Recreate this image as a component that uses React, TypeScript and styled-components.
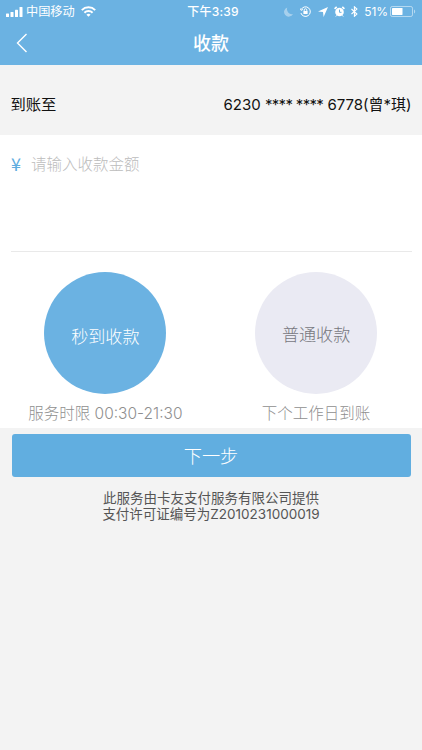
import React from "react";
import styled, { createGlobalStyle } from "styled-components";

const GlobalStyle = createGlobalStyle`
  * { box-sizing: border-box; }
  body {
    margin: 0;
    background: #f3f3f3;
    font-family: Inter, "Noto Sans CJK SC", sans-serif;
  }
  button { font-family: inherit; border: 0; padding: 0; }
`;

const Screen = styled.main`
  width: 422px;
  height: 750px;
  overflow: hidden;
  display: flex;
  flex-direction: column;
  background: #f3f3f3;
`;

const Header = styled.header`
  height: 65px;
  flex: none;
  background: #6bb2e2;
  color: #fff;
`;

const StatusBar = styled.div`
  height: 22px;
  padding: 0 6px 0 6px;
  display: grid;
  grid-template-columns: 1fr auto 1fr;
  align-items: center;
  font-size: 12px;
  line-height: 22px;
`;

const StatusGroup = styled.div<{ $end?: boolean }>`
  display: flex;
  align-items: center;
  height: 22px;
  justify-content: ${(p) => (p.$end ? "flex-end" : "flex-start")};
`;

const Carrier = styled.span`
  margin: 0 6px 0 3px;
  padding-top: 1px;
  font-size: 12.2px;
`;

const Clock = styled.span`
  font-weight: 500;
  font-size: 12px;
  letter-spacing: 0.25px;
  padding: 1px 0 0 4px;
`;

const Battery = styled.span`
  margin: 0 2px 0 6px;
  letter-spacing: -0.1px;
`;

const Icon = styled.svg<{ $gap?: number; $dim?: boolean }>`
  display: block;
  flex: none;
  margin-right: ${(p) => p.$gap ?? 0}px;
  opacity: ${(p) => (p.$dim ? 0.4 : 1)};
`;

const NavBar = styled.nav`
  height: 43px;
  padding: 0 16px;
  display: grid;
  grid-template-columns: 40px 1fr 40px;
  align-items: center;
`;

const BackButton = styled.button`
  display: flex;
  padding-bottom: 2px;
  background: none;
  color: inherit;
`;

const Title = styled.h1`
  margin: 0;
  text-align: center;
  font-size: 18px;
  line-height: 42px;
  font-weight: 500;
`;

const AccountRow = styled.section`
  height: 70px;
  flex: none;
  padding: 6px 10.5px 0;
  display: flex;
  align-items: center;
  justify-content: space-between;
  font-size: 15.3px;
  color: #111;
`;

const AccountNumber = styled.span`
  font-size: 15px;
  white-space: nowrap;
`;

const Mask = styled.span`
  letter-spacing: -0.68px;
`;

const Panel = styled.section`
  height: 293px;
  flex: none;
  background: #fff;
`;

const AmountField = styled.label`
  margin: 0 10px 0 11px;
  height: 117px;
  border-bottom: 1px solid #e9e9e9;
  padding-top: 18px;
  display: flex;
  align-items: flex-start;
`;

const Currency = styled.span`
  width: 20px;
  color: #60addf;
  font-family: "Noto Sans CJK SC", sans-serif;
  font-size: 18px;
  line-height: 20px;
`;

const AmountInput = styled.input`
  flex: 1;
  border: 0;
  padding: 0;
  height: 24px;
  background: none;
  outline: none;
  font: 300 15.5px/24px Inter, "Noto Sans CJK SC", sans-serif;
  &::placeholder { color: #bcbcbc; opacity: 1; }
`;

const Options = styled.div`
  display: grid;
  grid-template-columns: 1fr 1fr;
  padding: 20px 0.5px 0 0;
`;

const Option = styled.div`
  display: flex;
  flex-direction: column;
  align-items: center;
`;

const Disc = styled.button<{ $active?: boolean }>`
  width: 122px;
  height: 122px;
  border-radius: 50%;
  font-size: 17.1px;
  font-weight: 300;
  padding-top: ${(p) => (p.$active ? 4 : 0)}px;
  background: ${(p) => (p.$active ? "#6bb2e2" : "#eaeaf3")};
  color: ${(p) => (p.$active ? "#fff" : "#77777d")};
`;

const OptionNote = styled.span`
  margin-top: 8px;
  line-height: 24px;
  font-size: 15.5px;
  font-weight: 300;
  color: #8f8f8f;
  white-space: nowrap;
`;

const NextButton = styled.button`
  flex: none;
  height: 43px;
  margin: 6px 11.5px 0;
  padding-bottom: 2px;
  border-radius: 3px;
  background: #61aee0;
  color: #fff;
  font-size: 18.2px;
  font-weight: 300;
`;

const Notice = styled.footer`
  margin-top: 14px;
  display: flex;
  flex-direction: column;
  align-items: center;
  font-size: 13.5px;
  line-height: 15.5px;
  color: #555;
`;

const SignalIcon = () => (
  <Icon width="17" height="10" viewBox="0 0 17 10" fill="currentColor">
    <rect x="0" y="6.5" width="3" height="3.5" rx=".6" />
    <rect x="4.5" y="5" width="3" height="5" rx=".6" />
    <rect x="9" y="2.8" width="3" height="7.2" rx=".6" />
    <rect x="13.5" y="0" width="3" height="10" rx=".6" />
  </Icon>
);

const WifiIcon = () => (
  <Icon width="15" height="11" viewBox="0 0 15 11" fill="none" stroke="currentColor" strokeWidth="2">
    <path d="M.8 4.1a9.5 9.5 0 0 1 13.4 0" />
    <path d="M3.4 6.7a5.8 5.8 0 0 1 8.2 0" />
    <path d="M7.5 10.8 5.4 8.7a3 3 0 0 1 4.2 0Z" fill="currentColor" stroke="none" />
  </Icon>
);

const MoonIcon = () => (
  <Icon $gap={7} $dim width="9" height="10" viewBox="0 0 9 10" fill="currentColor">
    <path d="M3.3.5A4.7 4.7 0 1 0 9 7 4.9 4.9 0 0 1 3.3.5Z" />
  </Icon>
);

const RotationLockIcon = () => (
  <Icon $gap={7} width="11" height="11" viewBox="0 0 11 11" fill="none" stroke="currentColor">
    <path d="M1.2 3.5A4.8 4.8 0 1 1 .9 7" />
    <path d="m.2 2.4.9 2 1.9-1" strokeWidth=".9" />
    <rect x="3.4" y="5" width="4.2" height="3" fill="currentColor" stroke="none" />
    <path d="M4.2 5V4a1.3 1.3 0 0 1 2.6 0v1" strokeWidth=".9" />
  </Icon>
);

const LocationIcon = () => (
  <Icon $gap={6} width="10" height="10" viewBox="0 0 10 10" fill="currentColor">
    <path d="M10 0 5.6 10 5 5 0 4.5Z" />
  </Icon>
);

const AlarmIcon = () => (
  <Icon $gap={6} width="11" height="11" viewBox="0 0 11 11">
    <circle cx="5.5" cy="6" r="4.3" fill="#fff" />
    <path d="M.6 2.8 2.7.9M10.4 2.8 8.3.9" stroke="#fff" strokeWidth="1.7" />
    <path d="m2.8 9.3-1 1.2M8.2 9.3l1 1.2" stroke="#fff" />
    <path d="M5.5 3.6v2.7h2" fill="none" stroke="#6bb2e2" />
  </Icon>
);

const BluetoothIcon = () => (
  <Icon width="7" height="11" viewBox="0 0 7 11" fill="none" stroke="currentColor" strokeWidth="1.1">
    <path d="m.5 3 5.4 5-2.5 2.3V.8l2.5 2.3L.5 8" />
  </Icon>
);

const BatteryIcon = () => (
  <Icon width="26" height="11" viewBox="0 0 26 11">
    <rect x=".5" y=".5" width="22" height="10" rx="1.7" fill="none" stroke="#fff" strokeOpacity=".5" />
    <rect x="2" y="2" width="10.5" height="7" rx=".4" fill="#fff" />
    <path d="M24 3.5c1.6.8 1.6 3.2 0 4Z" fill="#fff" opacity=".5" />
  </Icon>
);

export default function App() {
  return (
    <Screen>
      <GlobalStyle />
      <Header>
        <StatusBar>
          <StatusGroup>
            <SignalIcon />
            <Carrier>中国移动</Carrier>
            <WifiIcon />
          </StatusGroup>
          <Clock>下午3:39</Clock>
          <StatusGroup $end>
            <MoonIcon />
            <RotationLockIcon />
            <LocationIcon />
            <AlarmIcon />
            <BluetoothIcon />
            <Battery>51%</Battery>
            <BatteryIcon />
          </StatusGroup>
        </StatusBar>
        <NavBar>
          <BackButton aria-label="返回">
            <Icon width="12" height="20" viewBox="0 0 12 20" fill="none" stroke="currentColor" strokeWidth="1.4">
              <path d="M10.5 1 1.5 10l9 9" />
            </Icon>
          </BackButton>
          <Title>收款</Title>
        </NavBar>
      </Header>
      <AccountRow>
        <span>到账至</span>
        <AccountNumber>
          6230 <Mask>**** ****</Mask> 6778(曾*琪)
        </AccountNumber>
      </AccountRow>
      <Panel>
        <AmountField>
          <Currency>¥</Currency>
          <AmountInput placeholder="请输入收款金额" />
        </AmountField>
        <Options>
          <Option>
            <Disc $active>秒到收款</Disc>
            <OptionNote>服务时限 00:30-21:30</OptionNote>
          </Option>
          <Option>
            <Disc>普通收款</Disc>
            <OptionNote>下个工作日到账</OptionNote>
          </Option>
        </Options>
      </Panel>
      <NextButton>下一步</NextButton>
      <Notice>
        <span>此服务由卡友支付服务有限公司提供</span>
        <span>支付许可证编号为Z2010231000019</span>
      </Notice>
    </Screen>
  );
}
